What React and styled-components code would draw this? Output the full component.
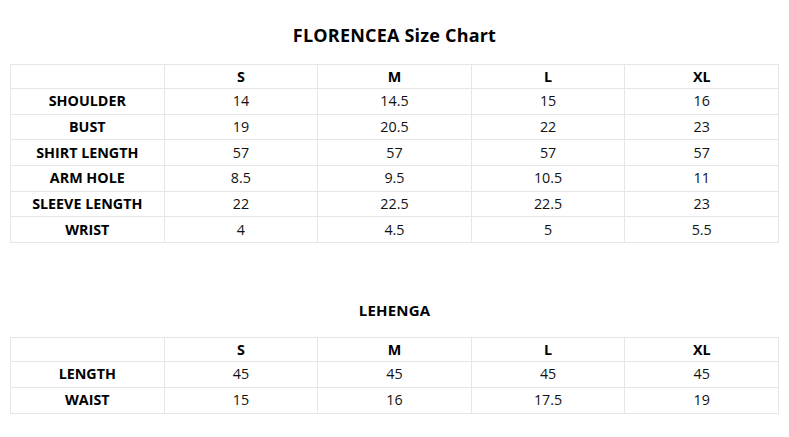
import styled, { createGlobalStyle } from "styled-components";

const GlobalStyle = createGlobalStyle`
  body {
    margin: 0;
    background: #fff;
    font-family: "Open Sans", "Noto Sans", sans-serif;
    color: #000;
  }
`;

const sizes = ["S", "M", "L", "XL"];

const topRows = [
  ["SHOULDER", "14", "14.5", "15", "16"],
  ["BUST", "19", "20.5", "22", "23"],
  ["SHIRT LENGTH", "57", "57", "57", "57"],
  ["ARM HOLE", "8.5", "9.5", "10.5", "11"],
  ["SLEEVE LENGTH", "22", "22.5", "22.5", "23"],
  ["WRIST", "4", "4.5", "5", "5.5"],
];

const lehengaRows = [
  ["LENGTH", "45", "45", "45", "45"],
  ["WAIST", "15", "16", "17.5", "19"],
];

const SizeChart = ({ rows }) => (
  <Table>
    <thead>
      <HeadRow>
        <HeadCell />
        {sizes.map((s) => (
          <HeadCell key={s}>{s}</HeadCell>
        ))}
      </HeadRow>
    </thead>
    <tbody>
      {rows.map(([label, ...vals]) => (
        <BodyRow key={label}>
          <LabelCell>{label}</LabelCell>
          {vals.map((v, i) => (
            <Cell key={i}>{v}</Cell>
          ))}
        </BodyRow>
      ))}
    </tbody>
  </Table>
);

export default function App() {
  return (
    <>
      <GlobalStyle />
      <Page>
        <Section>
          <Title>FLORENCEA Size Chart</Title>
          <SizeChart rows={topRows} />
        </Section>
        <Section $gap>
          <SubTitle>LEHENGA</SubTitle>
          <SizeChart rows={lehengaRows} />
        </Section>
      </Page>
    </>
  );
}

const Page = styled.div`
  padding: 23px 10px 0;
`;

const Section = styled.section`
  display: flex;
  flex-direction: column;
  gap: 17px;
  margin-top: ${({ $gap }) => ($gap ? "57px" : "0")};
`;

const Title = styled.h1`
  margin: 0;
  text-align: center;
  font-size: 18px;
  line-height: 24px;
  font-weight: 700;
  letter-spacing: 0.2px;
`;

const SubTitle = styled.h2`
  margin: 0;
  text-align: center;
  font-size: 15px;
  line-height: 20px;
  font-weight: 700;
  letter-spacing: 0.2px;
`;

const Table = styled.table`
  width: 100%;
  border-collapse: collapse;
  table-layout: fixed;
  font-size: 14.3px;
`;

const HeadRow = styled.tr`
  height: 24px;
`;

const BodyRow = styled.tr`
  height: 25.7px;
`;

const Cell = styled.td`
  border: 1px solid #e6e6e6;
  padding: 0 4px;
  text-align: center;
  vertical-align: middle;
  font-weight: 400;
  color: #111;
  line-height: 18px;
`;

const HeadCell = styled(Cell).attrs({ as: "th" })`
  font-weight: 700;
  color: #000;
`;

const LabelCell = styled(Cell)`
  font-weight: 700;
  color: #000;
`;
